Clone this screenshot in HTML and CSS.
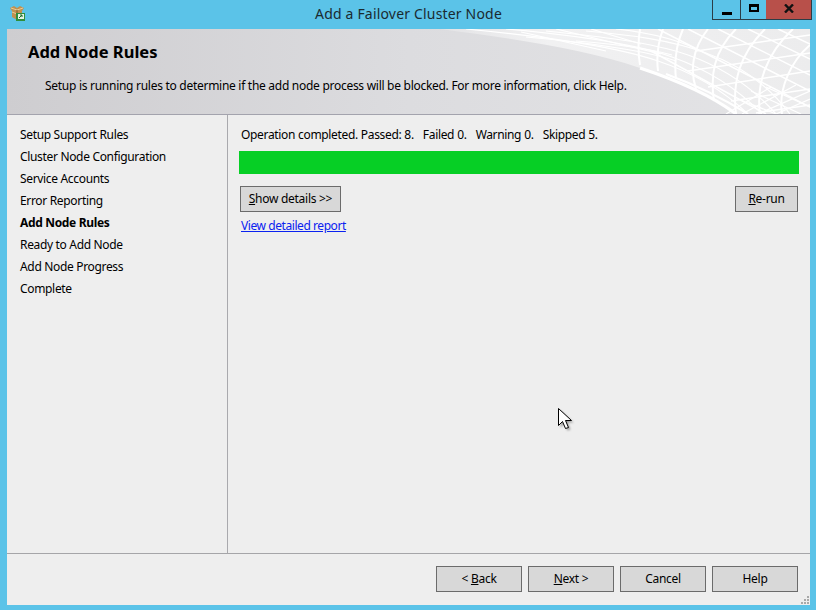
FILE: index.html
```html
<!DOCTYPE html>
<html lang="en">
<head>
<meta charset="utf-8">
<title>Add a Failover Cluster Node</title>
<link rel="stylesheet" href="styles.css">
</head>
<body>
<div class="window">
  <div class="titlebar">
    <svg class="app-icon" width="15" height="15" viewBox="0 0 15 15">
      <path d="M0 2l4-2 3 2 3-2 4 2-2 3v6l-5 3-5-3V5z" fill="#c0914f"/>
      <path d="M1 2l6 2 6-2M2 6l5 2" stroke="#e8cc98" fill="none"/>
      <path d="M7 4v9" stroke="#7d5a2a"/>
      <rect x="6" y="7" width="9" height="8" fill="#2f8f3c"/>
      <rect x="8" y="8" width="6" height="5" fill="#e4f4e4"/>
      <path d="M9 12l3-3M10 9h2v2" stroke="#1d6a2a" fill="none"/>
    </svg>
    <div class="title">Add a Failover Cluster Node</div>
    <div class="controls">
      <div class="ctl ctl-min"><span class="min-glyph"></span></div>
      <div class="ctl ctl-max"><span class="max-glyph"></span></div>
      <div class="ctl ctl-close">
        <svg width="10" height="9" viewBox="0 0 10 9"><path d="M1 .5l8 8M9 .5l-8 8" stroke="#111" stroke-width="2.4" fill="none"/></svg>
      </div>
    </div>
  </div>
  <div class="client">
    <header class="banner">
      <svg class="lattice" width="384" height="85" viewBox="0 0 384 85" fill="none" stroke="#fff">
        <defs>
          <linearGradient id="sheen" x1="0" x2="1" y1="0" y2="0">
            <stop offset="0" stop-color="#f2f2f3" stop-opacity=".3"/>
            <stop offset=".3" stop-color="#f1f1f2"/>
            <stop offset="1" stop-color="#ececed"/>
          </linearGradient>
        </defs>
        <path d="M14 0C90 10 160 20 214 39C250 51 285 66 310 85H384V0Z" fill="url(#sheen)" stroke="none"/>
        <g stroke-width="1.2">
          <path d="M40 0C110 7 185 16 232 32C268 44 298 62 322 85"/>
          <path d="M80 0C135 5 205 13 246 28C280 40 312 60 336 85"/>
          <path d="M120 2C170 7 225 13 262 26C296 38 326 58 350 85"/>
          <path d="M160 2C205 6 245 11 280 24C314 36 342 56 364 85"/>
          <path d="M100 8C155 13 215 20 250 32"/>
          <path d="M150 12C190 15 225 20 246 26"/>
          <path d="M190 0C225 4 250 10 270 20"/>
          <path d="M130 0L235 25M165 0L215 15M95 3L180 22"/>
          <path d="M300 85L345 58M316 85L370 56M332 85L384 62M350 85L384 70M312 70L350 85M325 62L375 85M340 58L384 78"/>
        </g>
        <path d="M214 39C250 51 285 66 310 85" stroke-width="3"/>
        <path d="M240 45C270 56 298 70 322 85" stroke-width="2"/>
        <g stroke-width="2">
          <path d="M214 0C212 12 212 24 214 36"/>
          <path d="M237 0C232 14 230 26 232 42"/>
          <path d="M257 0C250 16 248 32 250 50"/>
          <path d="M282 0C266 20 264 42 270 60"/>
          <path d="M310 0C288 22 284 46 288 72"/>
          <path d="M339 0C314 25 306 52 310 85"/>
          <path d="M367 0C340 25 330 55 334 85"/>
          <path d="M384 16C365 32 352 60 356 85"/>
        </g>
        <g stroke-width="1.5">
          <path d="M232 0L384 78M262 0L384 62M292 0L384 46M322 0L384 30M352 0L384 15M225 22L340 85"/>
          <path d="M270 22L384 6M262 42L384 24M282 58L384 42M305 72L384 60M330 84L384 76"/>
        </g>
      </svg>
      <h1 class="banner-title">Add Node Rules</h1>
      <p class="banner-text">Setup is running rules to determine if the add node process will be blocked. For more information, click Help.</p>
    </header>
    <div class="main">
      <nav class="steps">
        <div class="step">Setup Support Rules</div>
        <div class="step">Cluster Node Configuration</div>
        <div class="step">Service Accounts</div>
        <div class="step">Error Reporting</div>
        <div class="step step-active">Add Node Rules</div>
        <div class="step">Ready to Add Node</div>
        <div class="step">Add Node Progress</div>
        <div class="step">Complete</div>
      </nav>
      <section class="content">
        <div class="status">Operation completed. Passed: 8.   Failed 0.   Warning 0.   Skipped 5.</div>
        <div class="progress"></div>
        <div class="actions">
          <button class="btn btn-details" type="button"><u>S</u>how details &gt;&gt;</button>
          <button class="btn btn-rerun" type="button"><u>R</u>e-run</button>
        </div>
        <a class="report" href="#">View detailed report</a>
      </section>
    </div>
    <footer class="footer">
      <button class="btn btn-nav" type="button">&lt; <u>B</u>ack</button>
      <button class="btn btn-nav" type="button"><u>N</u>ext &gt;</button>
      <button class="btn btn-nav" type="button">Cancel</button>
      <button class="btn btn-nav" type="button">Help</button>
      <svg class="grip" width="10" height="10" viewBox="0 0 10 10" fill="#a8a8a8">
        <rect x="7" y="1" width="2" height="2"/><rect x="4" y="4" width="2" height="2"/><rect x="7" y="4" width="2" height="2"/><rect x="1" y="7" width="2" height="2"/><rect x="4" y="7" width="2" height="2"/><rect x="7" y="7" width="2" height="2"/>
      </svg>
    </footer>
  </div>
  <svg class="cursor" width="20" height="28" viewBox="0 0 20 28">
    <path d="M2.5 2.5v17l4-4 3 7 3-1-3-7h6z" fill="#555" opacity=".55" class="cursor-shadow"/>
    <path d="M.5.5v17l4-4 3 7 3-1-3-7h6z" fill="#fff" stroke="#000"/>
  </svg>
</div>
</body>
</html>
```
FILE: styles.css
```css
* { box-sizing: border-box; }
html, body { margin: 0; padding: 0; }
body { font-family: "Noto Sans", "Open Sans", sans-serif; font-size: 12px; letter-spacing: -0.28px; color: #000; overflow: hidden; }
.window { position: relative; width: 816px; height: 610px; background: #5bc3e8; display: flex; flex-direction: column; padding: 0 6px 5px 7px; }
.titlebar { position: relative; height: 29px; flex: none; display: flex; justify-content: center; margin: 0 -6px 0 -7px; }
.app-icon { position: absolute; left: 10px; top: 6px; }
.title { font-size: 14px; letter-spacing: 0.18px; padding-left: 1px; line-height: 27px; color: #1a2a30; }
.controls { position: absolute; left: 712px; top: 0; display: flex; height: 20px; border: 1px solid #2b3d47; border-top: 0; }
.ctl { display: flex; align-items: center; justify-content: center; height: 19px; }
.ctl-min { width: 28px; border-right: 1px solid #2b3d47; }
.ctl-max { width: 25px; }
.ctl-close { width: 45px; background: #b8504a; }
.min-glyph { width: 10px; height: 3px; background: #000; margin-top: 7px; }
.max-glyph { width: 10px; height: 8px; border: 2px solid #000; border-top-width: 3px; margin-top: -4px; }
.ctl-close svg { margin-top: -2px; }
.client { flex: 1; display: flex; flex-direction: column; background: #eeeeee; min-height: 0; }
.banner { position: relative; height: 86px; flex: none; background: linear-gradient(90deg, #cecdd0 0%, #dcdcdf 50%, #e4e4e6 100%); border-bottom: 1px solid #a3a3ad; overflow: hidden; }
.lattice { position: absolute; right: 0; top: 0; }
.banner-title { position: relative; margin: 0; padding: 12px 0 0 21px; font-size: 16.5px; letter-spacing: 0; line-height: 22px; font-weight: 700; }
.banner-text { position: relative; margin: 0; padding: 14px 0 0 38px; font-size: 12px; line-height: 18px; white-space: pre; }
.main { flex: 1; display: flex; min-height: 0; }
.steps { width: 221px; flex: none; border-right: 1px solid #a9a9ad; padding: 9px 0 0 13px; letter-spacing: -0.33px; }
.step { height: 22px; line-height: 22px; white-space: nowrap; }
.step-active { font-weight: 700; }
.content { flex: 1; display: flex; flex-direction: column; padding: 11px 11px 0 11px; }
.status { padding-left: 2px; line-height: 18px; height: 17px; white-space: pre; letter-spacing: -0.34px; word-spacing: 0.25px; }
.progress { height: 23px; margin-top: 8px; background: #06cf25; }
.actions { display: flex; justify-content: space-between; margin-top: 12px; padding: 0 1px; }
.btn { font: inherit; letter-spacing: inherit; color: #000; background: #d8d8d8; border: 1px solid #6b6b6b; border-radius: 0; height: 26px; padding: 0; margin: 0; line-height: 22px; }
.btn-details { width: 101px; }
.btn-rerun { width: 63px; }
.report { align-self: flex-start; margin: 5px 0 0 2px; line-height: 18px; letter-spacing: -0.43px; color: #0a22f0; text-decoration: underline; }
.footer { position: relative; height: 52px; flex: none; border-top: 1px solid #a5a5a8; display: flex; justify-content: flex-end; gap: 6px; padding: 12px 12px 0 0; }
.btn-nav { width: 86px; }
.grip { position: absolute; right: 0; bottom: 0; }
.cursor { position: absolute; left: 558px; top: 408px; }
.cursor-shadow { filter: blur(1px); }
```
